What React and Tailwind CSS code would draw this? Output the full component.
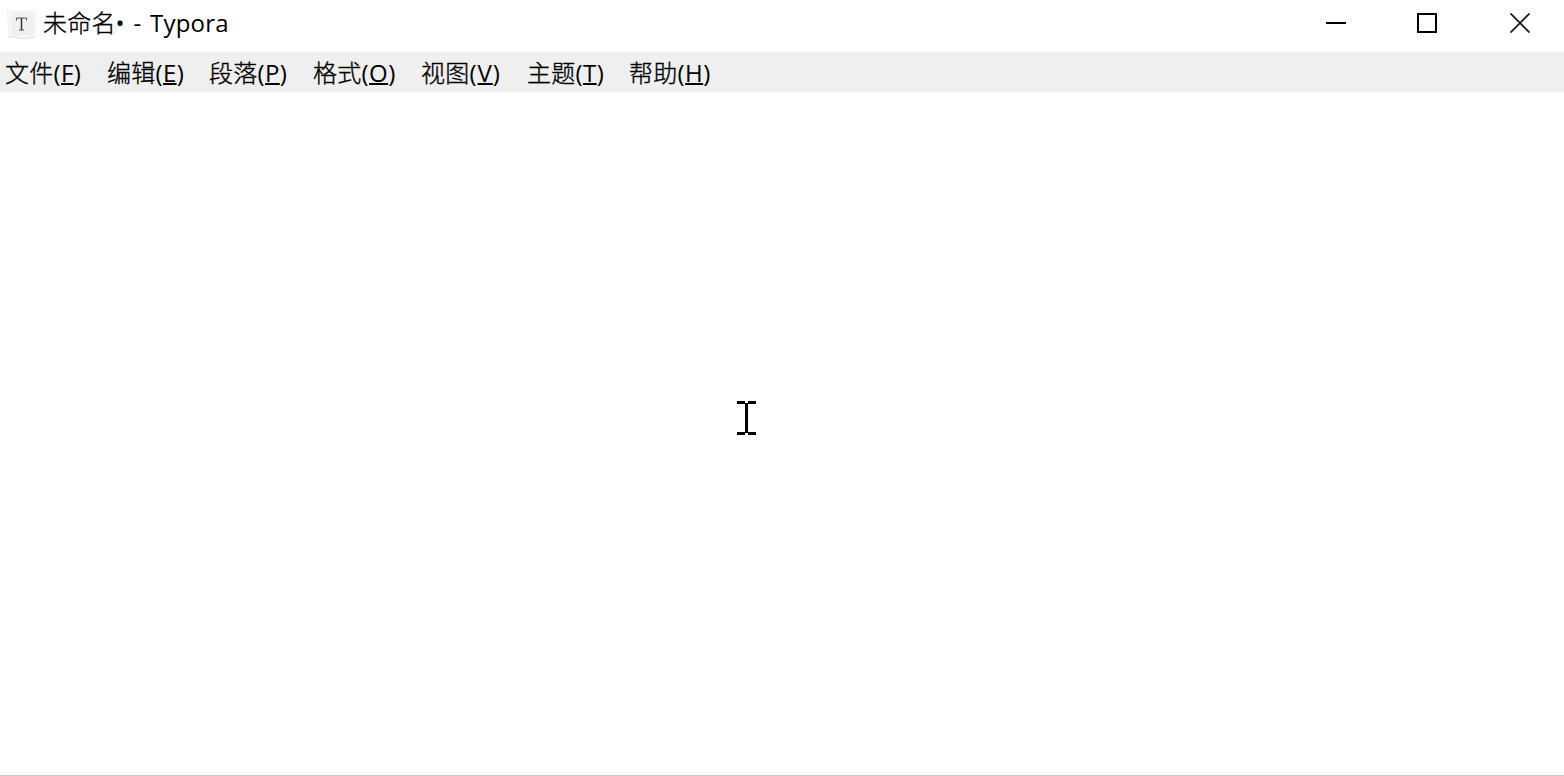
const menus = [
  { label: "文件", accessKey: "F", width: "w-[102px]", tracking: "tracking-[0.3px]" },
  { label: "编辑", accessKey: "E", width: "w-[102px]", tracking: "tracking-[0.3px]" },
  { label: "段落", accessKey: "P", width: "w-[104px]", tracking: "tracking-[0.3px]" },
  { label: "格式", accessKey: "O", width: "w-[108px]", tracking: "tracking-[0.4px]" },
  { label: "视图", accessKey: "V", width: "w-[106px]", tracking: "tracking-[0.9px]" },
  { label: "主题", accessKey: "T", width: "w-[102px]", tracking: "tracking-[0.4px]" },
  { label: "帮助", accessKey: "H", width: "w-[102px]", tracking: "tracking-[0.4px]" },
];

const AppIcon = () => (
  <svg width="32" height="32" viewBox="0 0 32 32" className="shrink-0">
    <path d="M2 3 L13 3.5 L30 2.5 L30.5 16 L31 29 L18 30.5 L4 28.5 L3.5 16 Z" fill="#fafafa" stroke="#f0f0f0" />
    <path d="M4 28.5 L18 30.5 L30 29" fill="none" stroke="#e2e2e2" />
    <rect x="6" y="4.5" width="23" height="23" rx="2" fill="#f0f0f0" />
    <path
      d="M11.5 12.5 V10 H21.5 V12.5 M14 22 H19"
      fill="none"
      stroke="#444"
      strokeWidth="0.9"
    />
    <path d="M16.5 10 V22" stroke="#333" strokeWidth="1.5" />
  </svg>
);

const TitleBar = () => (
  <header className="flex h-[52px] items-start justify-between">
    <div className="flex h-[47px] items-center pl-[5px]">
      <AppIcon />
      <h1 className="-mt-px ml-1.5 text-2xl leading-8 whitespace-pre">
        <span className="font-light tracking-[0.2px] [-webkit-text-stroke:0.35px_black]">未命名</span>
        <span className="tracking-[0.2px] [word-spacing:2.2px]">• - Typora</span>
      </h1>
    </div>

    {/* Window controls */}
    <div className="flex h-[46px] items-center pr-[33px]">
      <button aria-label="Minimize" className="mr-[71px]">
        <svg width="20" height="20" viewBox="0 0 20 20" className="block">
          <path d="M0 10 H20" stroke="#000" strokeWidth="2" />
        </svg>
      </button>
      <button aria-label="Maximize" className="mr-[72px]">
        <svg width="20" height="20" viewBox="0 0 20 20" className="block">
          <rect x="1" y="1" width="18" height="18" fill="none" stroke="#000" strokeWidth="2" />
        </svg>
      </button>
      <button aria-label="Close">
        <svg width="22" height="20" viewBox="0 0 22 20" className="block">
          <path d="M1.5 0.5 L20.5 19.5 M20.5 0.5 L1.5 19.5" stroke="#111" strokeWidth="1.7" />
        </svg>
      </button>
    </div>
  </header>
);

const MenuBar = () => (
  <nav className="flex h-10 bg-[#efefef] pt-[5px] pl-[5px] text-2xl leading-8">
    {menus.map(({ label, accessKey, width, tracking }) => (
      <div key={accessKey} className={`shrink-0 whitespace-nowrap ${width}`}>
        <span className="font-light tracking-[0.3px] [-webkit-text-stroke:0.35px_black]">{label}</span>
        <span className={tracking}>
          (
          <span className="underline decoration-2 underline-offset-1">{accessKey}</span>
          )
        </span>
      </div>
    ))}
  </nav>
);

const App = () => (
  <div className="flex h-[776px] w-[1564px] flex-col overflow-hidden bg-white font-['Open_Sans','Noto_Sans_CJK_SC',sans-serif] text-black">
    <TitleBar />
    <MenuBar />

    {/* Editor */}
    <main className="relative flex-1">
      <svg
        width="19"
        height="34"
        viewBox="0 0 19 34"
        shapeRendering="crispEdges"
        className="absolute top-[309px] left-[737px]"
      >
        <path d="M0 0H8V3H0Z M11 0H19V3H11Z M8 2H11V32H8Z M0 31H8V34H0Z M11 31H19V34H11Z" />
      </svg>
    </main>
    <footer className="h-1 border-t border-b border-t-[#f8f8f8] border-b-[#c8c8c8]" />
  </div>
);

export default App;
